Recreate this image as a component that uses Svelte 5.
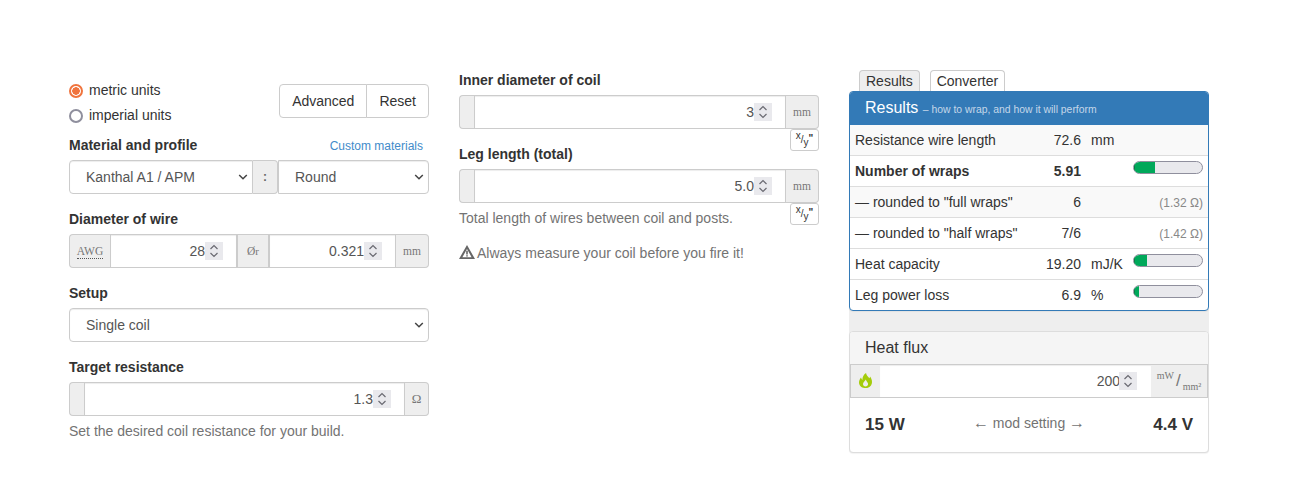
<script lang="ts">
  const rows = [
    { name: 'Resistance wire length', value: '72.6', unit: 'mm' },
    { name: 'Number of wraps', value: '5.91', bar: 21, bold: true },
    { name: '— rounded to "full wraps"', value: '6', note: '(1.32 Ω)' },
    { name: '— rounded to "half wraps"', value: '7/6', note: '(1.42 Ω)' },
    { name: 'Heat capacity', value: '19.20', unit: 'mJ/K', bar: 13, plain: true },
    { name: 'Leg power loss', value: '6.9', unit: '%', bar: 5 },
  ];
</script>

{#snippet num(id: string | undefined, value: string, step: string = '1')}
  <div class="num">
    <input {id} type="number" {value} {step} />
    <span class="spin" aria-hidden="true">
      <svg width="18" height="18" viewBox="0 0 18 18">
        <path d="M5.5 7 L9 3.5 L12.5 7 M5.5 11 L9 14.5 L12.5 11" fill="none" stroke="#6a6a72" stroke-width="1.2" />
      </svg>
    </span>
  </div>
{/snippet}

{#snippet sel(id: string | undefined, text: string, cls: string)}
  <div class="sel {cls}">
    <select {id}><option>{text}</option></select>
    <svg class="chev" width="10" height="6" viewBox="0 0 10 6" aria-hidden="true">
      <path d="M1.2 1 L5 4.8 L8.8 1" fill="none" stroke="#444" stroke-width="1.5" />
    </svg>
  </div>
{/snippet}

<div class="page">
  <div class="col">
    <div class="top">
      <div class="radios">
        <label class="radio"><input type="radio" name="units" checked /> metric units</label>
        <label class="radio"><input type="radio" name="units" /> imperial units</label>
      </div>
      <div class="btns">
        <button>Advanced</button>
        <button>Reset</button>
      </div>
    </div>

    <div class="group">
      <div class="labelrow">
        <label for="material">Material and profile</label>
        <span class="link">Custom materials</span>
      </div>
      <div class="igroup">
        {@render sel('material', 'Kanthal A1 / APM', 'left')}
        <span class="addon colon">:</span>
        {@render sel(undefined, 'Round', 'right')}
      </div>
    </div>

    <div class="group">
      <label for="awg">Diameter of wire</label>
      <div class="igroup">
        <span class="addon mono awg"><abbr>AWG</abbr></span>
        {@render num('awg', '28')}
        <span class="addon mono dia">Ø<sub>r</sub></span>
        {@render num(undefined, '0.321', '0.001')}
        <span class="addon mono mm">mm</span>
      </div>
    </div>

    <div class="group">
      <label for="setup">Setup</label>
      {@render sel('setup', 'Single coil', 'full')}
    </div>

    <div class="group">
      <label for="target">Target resistance</label>
      <div class="igroup">
        <span class="addon blank"></span>
        {@render num('target', '1.3', '0.1')}
        <span class="addon mono ohm">Ω</span>
      </div>
      <p class="help">Set the desired coil resistance for your build.</p>
    </div>
  </div>

  <div class="col">
    <div class="group">
      <label for="inner">Inner diameter of coil</label>
      <div class="igroup">
        <span class="addon blank"></span>
        {@render num('inner', '3')}
        <span class="addon mono mm">mm</span>
        <button class="conv"><sup>x</sup>/<sub>y</sub><span class="inch">"</span></button>
      </div>
    </div>

    <div class="group">
      <label for="leg">Leg length (total)</label>
      <div class="igroup">
        <span class="addon blank"></span>
        {@render num('leg', '5.0', '0.1')}
        <span class="addon mono mm">mm</span>
        <button class="conv"><sup>x</sup>/<sub>y</sub><span class="inch">"</span></button>
      </div>
      <p class="help">Total length of wires between coil and posts.</p>
    </div>

    <p class="warn">
      <svg width="16" height="14" viewBox="0 0 16 14" aria-hidden="true">
        <path fill-rule="evenodd" d="M8 0 L16 14 H0 Z M8 4 L3.4 12.2 H12.6 Z M7.2 5.8 H8.8 V9.6 H7.2 Z M7.2 10.2 H8.8 V11.6 H7.2 Z" fill="#666" />
      </svg>
      Always measure your coil before you fire it!
    </p>
  </div>

  <div class="col">
    <div class="tabs">
      <span class="tab active">Results</span>
      <span class="tab">Converter</span>
    </div>

    <div class="well">
      <section class="panel primary">
        <h3 class="head">Results <small>– how to wrap, and how it will perform</small></h3>
        <table>
          <colgroup>
            <col style="width: 180px" />
            <col style="width: 56px" />
            <col style="width: 42px" />
            <col style="width: 80px" />
          </colgroup>
          <tbody>
            {#each rows as row, i}
              <tr class:odd={i % 2 === 0 && !row.plain} class:bold={row.bold}>
                <td class="name">{row.name}</td>
                <td class="val">{row.value}</td>
                <td class="unit">{row.unit ?? ''}</td>
                <td class="extra">
                  {#if row.bar}
                    <div class="bar"><div class="fill" style="width: {row.bar}px"></div></div>
                  {:else if row.note}
                    <span class="note">{row.note}</span>
                  {/if}
                </td>
              </tr>
            {/each}
          </tbody>
        </table>
      </section>

      <section class="panel flux">
        <h3 class="head">Heat flux</h3>
        <div class="igroup square">
          <span class="addon flame">
            <svg width="13" height="15" viewBox="0 0 13 15" aria-hidden="true">
              <path fill-rule="evenodd" d="M7 0 C7.6 2.6 9 3.6 10.3 5.2 C10.8 4.8 11 4.2 11 3.6 C12.4 5.3 13 7.2 13 9 C13 12.4 10.4 15 7 15 H5.6 C2.4 15 0 12.6 0 9.6 C0 7.4 1 6 2 4.6 C2.2 5.6 2.6 6.4 3.4 6.9 C3.4 4 4.6 1.6 7 0 Z M6.7 6.4 C6.5 7.8 4 8.8 4 11 C4 12.4 5.1 13.4 6.5 13.4 C7.9 13.4 9.1 12.4 9.1 11 C9.1 9.4 7.4 8.2 6.7 6.4 Z" fill="#a4cc0a" />
            </svg>
          </span>
          {@render num(undefined, '200')}
          <span class="addon mono fluxunit"><sup>mW</sup><span class="slash">/</span><sub>mm²</sub></span>
        </div>
        <div class="mod">
          <strong>15 W</strong>
          <span class="setting"><span class="arrow">←</span> mod setting <span class="arrow">→</span></span>
          <strong>4.4 V</strong>
        </div>
      </section>
    </div>
  </div>
</div>

<style>
  :global(body) {
    background: #fff;
    color: #333;
    font-family: "Liberation Sans", Arial, sans-serif;
    font-size: 14px;
    line-height: 20px;
  }

  .page {
    display: grid;
    grid-template-columns: 360px 360px 360px;
    gap: 30px;
    padding: 70px 0 0 69px;
  }

  .top {
    display: flex;
    justify-content: space-between;
    align-items: flex-start;
    padding: 10px 0;
  }

  .radios {
    display: flex;
    flex-direction: column;
    gap: 5px;
  }

  .radio {
    display: flex;
    align-items: center;
    font-weight: 400;
    margin: 0;
    gap: 6px;
    height: 20px;
  }

  .radio input {
    appearance: none;
    box-sizing: border-box;
    margin: 2px 0 0;
    width: 14px;
    height: 14px;
    border: 2px solid #8f8f9d;
    border-radius: 50%;
    background: #fff;
  }

  .radio input:checked {
    border-color: #f0743e;
    background: radial-gradient(circle, #f0743e 0 3.5px, #fff 4px);
  }

  .btns {
    display: flex;
    margin-top: 4px;
  }

  .btns button {
    height: 34px;
    background: #fff;
    border: 1px solid #ccc;
    color: #333;
    font: inherit;
    padding: 6px 12px;
    border-radius: 4px 0 0 4px;
  }

  .btns button + button {
    margin-left: -1px;
    border-radius: 0 4px 4px 0;
  }

  .group {
    margin-bottom: 15px;
  }

  label {
    display: block;
    font-weight: 700;
    margin-bottom: 5px;
  }

  .labelrow {
    display: flex;
    justify-content: space-between;
    align-items: baseline;
  }

  .link {
    font-size: 12px;
    color: #428bca;
    margin-right: 6px;
  }

  .igroup {
    position: relative;
    display: flex;
    height: 34px;
  }

  .num {
    position: relative;
    flex: 1 1 0;
    min-width: 0;
  }

  input[type="number"] {
    display: block;
    width: 100%;
    height: 34px;
    box-sizing: border-box;
    border: 1px solid #ccc;
    box-shadow: inset 0 1px 1px rgba(0, 0, 0, 0.075);
    padding: 6px 31px 6px 12px;
    color: #555;
    font: inherit;
    text-align: right;
    background: #fff;
    margin: 0;
    outline: none;
    appearance: textfield;
  }

  input[type="number"]::-webkit-inner-spin-button {
    appearance: none;
  }

  .spin {
    position: absolute;
    top: 8px;
    right: 14px;
    width: 18px;
    height: 18px;
    background: #e9e9ed;
    pointer-events: none;
  }

  .spin svg {
    display: block;
  }

  .sel {
    position: relative;
  }

  .sel select {
    appearance: none;
    display: block;
    width: 100%;
    height: 34px;
    box-sizing: border-box;
    border: 1px solid #ccc;
    box-shadow: inset 0 1px 1px rgba(0, 0, 0, 0.075);
    padding: 6px 12px 6px 16px;
    color: #555;
    font: inherit;
    background: #fff;
    border-radius: 4px;
    margin: 0;
  }

  .chev {
    position: absolute;
    top: 14px;
    right: 5px;
    pointer-events: none;
  }

  .left {
    width: 184px;
  }

  .left select {
    border-radius: 4px 0 0 4px;
  }

  .right {
    width: 151px;
  }

  .right select {
    border-radius: 0 4px 4px 0;
  }

  .addon {
    box-sizing: border-box;
    flex: none;
    display: flex;
    align-items: center;
    justify-content: center;
    height: 34px;
    background: #eee;
    border: 1px solid #ccc;
    color: #555;
  }

  .addon:first-child {
    border-radius: 4px 0 0 4px;
    border-right: 0;
  }

  .igroup .addon:last-of-type:not(:first-child) {
    border-radius: 0 4px 4px 0;
    border-left: 0;
  }

  .mono {
    font-family: "Liberation Serif", serif;
    font-size: 11.5px;
    color: #777;
  }

  .blank {
    width: 15px;
  }

  .colon {
    width: 25px;
    font-size: 12px;
    font-weight: 700;
    color: #666;
  }

  .awg {
    width: 41px;
  }

  abbr {
    border-bottom: 1px dotted #555;
    line-height: 14px;
  }

  .dia {
    width: 32px;
  }

  .dia sub {
    font-size: 11px;
    line-height: 0;
  }

  .mm {
    width: 33px;
  }

  .ohm {
    width: 24px;
    font-size: 13px;
  }

  .conv {
    position: absolute;
    top: 34px;
    right: 0;
    box-sizing: border-box;
    width: 29px;
    height: 22px;
    padding: 0;
    background: #fff;
    border: 1px solid #ccc;
    border-radius: 3px;
    color: #333;
    font: 10px/1 "Liberation Sans", Arial, sans-serif;
  }

  .conv sup,
  .conv sub {
    font-size: 10px;
    line-height: 0;
  }

  .inch {
    position: relative;
    top: -1px;
    font-size: 10px;
    font-weight: 700;
  }

  .help {
    margin: 5px 0 10px;
    color: #737373;
  }

  .warn {
    display: flex;
    align-items: center;
    gap: 2px;
    margin: 0;
    color: #737373;
  }

  .warn svg {
    flex: none;
    margin-top: -2px;
  }

  .tabs {
    display: flex;
    gap: 10px;
    padding-left: 10px;
    height: 21px;
  }

  .tab {
    box-sizing: border-box;
    height: 21px;
    padding: 1px 6px 0;
    border: 1px solid #ccc;
    border-bottom: 0;
    border-radius: 4px 4px 0 0;
    line-height: 19px;
    background: #fff;
  }

  .tab.active {
    background: #eee;
  }

  .well {
    background: #eee;
    border-radius: 4px;
  }

  .panel {
    background: #fff;
    border: 1px solid #ddd;
    border-radius: 4px;
    box-shadow: 0 1px 1px rgba(0, 0, 0, 0.05);
  }

  .primary {
    border-color: #337ab7;
    margin-bottom: 20px;
  }

  .head {
    margin: 0;
    height: 32px;
    box-sizing: border-box;
    padding: 4px 15px;
    font-size: 16px;
    font-weight: 400;
    line-height: 23px;
    background: #f5f5f5;
    color: #333;
    border-radius: 3px 3px 0 0;
  }

  .primary .head {
    height: 33px;
    background: #337ab7;
    color: #fff;
  }

  .head small {
    font-size: 10.4px;
    color: #c4d7e9;
  }

  table {
    table-layout: fixed;
    border-collapse: collapse;
    width: 358px;
  }

  td {
    height: 31px;
    box-sizing: border-box;
    padding: 5px;
    border-top: 1px solid #ddd;
    white-space: nowrap;
    vertical-align: middle;
  }

  tr:first-child td {
    border-top: 0;
    height: 30px;
  }

  tr:last-child td {
    height: 30px;
    padding-bottom: 4px;
  }

  tr.odd td {
    background: #f9f9f9;
  }

  tr.bold td {
    font-weight: 700;
  }

  .val {
    text-align: right;
  }

  td.extra {
    text-align: right;
    vertical-align: top;
    padding-top: 5px;
    padding-bottom: 0;
  }

  .note {
    font-size: 12px;
    color: #888;
  }

  .bar {
    box-sizing: border-box;
    width: 70px;
    height: 13px;
    background: #e9e9ed;
    border: 1px solid #8f8f9d;
    border-radius: 7px;
    overflow: hidden;
  }

  .fill {
    height: 100%;
    background: #00a85a;
    box-shadow: inset 1px 0 0 #0a7a45;
  }

  .square .addon {
    border-radius: 0 !important;
  }

  .flame {
    width: 30px;
  }

  .fluxunit {
    width: 57px;
    font-size: 10.5px;
  }

  .fluxunit sup,
  .fluxunit sub {
    font-size: 10px;
    line-height: 0;
    position: relative;
    vertical-align: baseline;
  }

  .fluxunit sup {
    top: -5px;
  }

  .fluxunit sub {
    top: 6px;
  }

  .slash {
    font-family: "Liberation Sans", Arial, sans-serif;
    font-size: 17px;
    margin: 0 2px;
    color: #777;
  }

  .square input[type="number"] {
    border-left: 0;
    border-right: 0;
  }

  .mod {
    display: flex;
    justify-content: space-between;
    align-items: center;
    height: 54px;
    padding: 1px 15px 0;
    box-sizing: border-box;
  }

  .mod strong {
    font-size: 17px;
  }

  .setting {
    color: #737373;
    position: relative;
    top: -2px;
  }

  .arrow {
    font-size: 16px;
    line-height: 1;
  }
</style>
